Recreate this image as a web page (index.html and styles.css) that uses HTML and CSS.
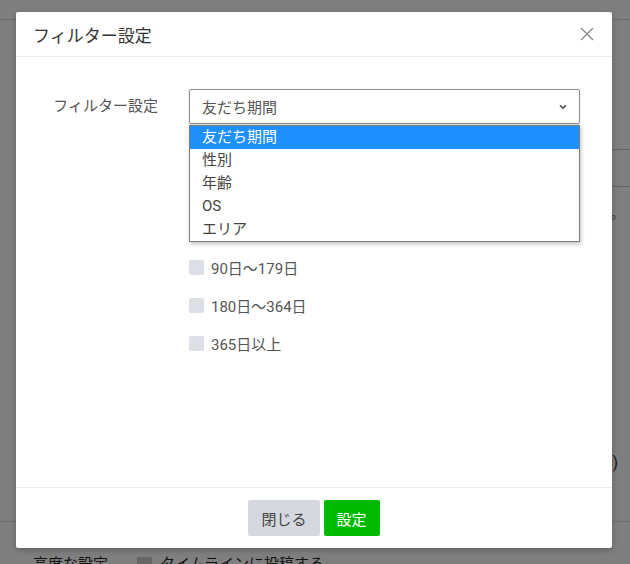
FILE: index.html
```html
<!DOCTYPE html>
<html lang="ja">
<head>
  <meta charset="UTF-8">
  <meta name="viewport" content="width=device-width, initial-scale=1.0">
  <title>フィルター設定</title>
  <link rel="stylesheet" href="styles.css">
</head>
<body>
  <!-- 背景のページ -->
  <div class="page">
    <div class="page-top"></div>
    <div class="page-main">
      <div class="page-row page-row-first"></div>
      <div class="page-row"></div>
      <div class="page-row page-row-tall">
        <span class="page-note">。</span>
        <span class="page-paren">)</span>
      </div>
    </div>
    <div class="page-bottom">
      <span class="page-label">高度な設定</span>
      <span class="page-check"></span>
      <span class="page-text">タイムラインに投稿する</span>
    </div>
  </div>

  <div class="overlay"></div>

  <!-- フィルター設定モーダル -->
  <div class="modal">
    <div class="modal-header">
      <h2 class="modal-title">フィルター設定</h2>
      <span class="close-btn">
        <svg width="14" height="14" viewBox="0 0 14 14"><path d="M1 1L13 13M13 1L1 13" stroke="#888" stroke-width="1.3" fill="none"/></svg>
      </span>
    </div>

    <div class="modal-body">
      <div class="form-row">
        <label class="form-label">フィルター設定</label>
        <div class="form-field">
          <div class="select">
            <span>友だち期間</span>
            <svg class="select-arrow" width="8" height="6" viewBox="0 0 8 6"><path d="M1 1.2L4 4.2L7 1.2" stroke="#444" stroke-width="1.6" fill="none"/></svg>
          </div>
          <ul class="select-list">
            <li class="selected">友だち期間</li>
            <li>性別</li>
            <li>年齢</li>
            <li>OS</li>
            <li>エリア</li>
          </ul>

          <!-- 上の選択肢はドロップダウンの下に隠れている -->
          <div class="check-list">
            <div class="check-item"><span class="check-box"></span>90日〜179日</div>
            <div class="check-item"><span class="check-box"></span>180日〜364日</div>
            <div class="check-item"><span class="check-box"></span>365日以上</div>
          </div>
        </div>
      </div>
    </div>

    <div class="modal-footer">
      <button class="btn btn-close">閉じる</button>
      <button class="btn btn-ok">設定</button>
    </div>
  </div>
</body>
</html>
```

FILE: styles.css
```css
* {
  margin: 0;
  padding: 0;
  box-sizing: border-box;
}

body {
  font-family: Roboto, "Noto Sans CJK JP", sans-serif;
  background-color: #fff;
  color: #555;
  width: 630px;
  height: 564px;
  overflow: hidden;
  position: relative;
}

/* 背景のページ */
.page {
  height: 564px;
  display: flex;
  flex-direction: column;
}

.page-top {
  height: 20px;
  border-bottom: 1px solid #ddd;
  flex-shrink: 0;
}

.page-main {
  flex: 1;
  margin-left: 400px;
}

.page-row {
  height: 37px;
  border-bottom: 1px solid #ccc;
}

.page-row-first {
  height: 130px;
}

.page-row-tall {
  height: 333px;
  border-bottom: none;
  display: flex;
  flex-direction: column;
  align-items: flex-end;
  justify-content: space-between;
  padding: 16px 12px 48px 0;
}

.page-note {
  font-size: 13px;
  color: #666;
  margin-right: -6px;
}

.page-paren {
  font-size: 16px;
  color: #333;
}

.page-bottom {
  height: 43px;
  border-top: 1px solid #ddd;
  display: flex;
  align-items: flex-start;
  padding: 32px 0 0 33px;
  font-size: 15px;
  color: #222;
  line-height: 20px;
}

.page-label {
  width: 104px;
}

.page-check {
  width: 15px;
  height: 15px;
  background-color: #ccc;
  margin: 3px 8px 0 0;
}

.overlay {
  position: absolute;
  top: 0;
  left: 0;
  width: 100%;
  height: 100%;
  background-color: rgba(0, 0, 0, 0.5);
}

/* モーダル */
.modal {
  position: absolute;
  top: 12px;
  left: 16px;
  width: 596px;
  height: 536px;
  background-color: #fff;
  border-radius: 2px;
  box-shadow: 0 2px 6px rgba(0, 0, 0, 0.25);
  display: flex;
  flex-direction: column;
}

.modal-header {
  height: 45px;
  border-bottom: 1px solid #eee;
  display: flex;
  align-items: center;
  justify-content: space-between;
  padding: 0 18px 0 17px;
  flex-shrink: 0;
}

.modal-title {
  font-size: 17px;
  font-weight: normal;
  color: #333;
}

.close-btn {
  display: flex;
  cursor: pointer;
}

.modal-body {
  flex: 1;
  padding: 32px 32px 0 0;
}

.form-row {
  display: grid;
  grid-template-columns: 142px 1fr;
  column-gap: 31px;
}

.form-label {
  text-align: right;
  font-size: 15px;
  line-height: 35px;
  color: #555;
}

.form-field {
  position: relative;
}

.select {
  height: 35px;
  border: 1px solid #8f8f8f;
  border-radius: 2px;
  box-shadow: 0 1px 2px rgba(0, 0, 0, 0.2);
  display: flex;
  align-items: center;
  justify-content: space-between;
  padding: 0 12px 0 12px;
  font-size: 15px;
  color: #555;
}

.select-arrow {
  margin-top: 1px;
}

.select-list {
  position: absolute;
  top: 36px;
  left: 0;
  right: 0;
  list-style: none;
  background-color: #fff;
  border: 1px solid #7d7d7d;
  box-shadow: 1px 2px 4px rgba(0, 0, 0, 0.25);
  z-index: 10;
  font-size: 15px;
  color: #444;
}

.select-list li {
  height: 23px;
  line-height: 23px;
  padding-left: 12px;
}

.select-list li.selected {
  background-color: #1e90ff;
  color: #fff;
}

.check-list {
  margin-top: 124px;
}

.check-item {
  height: 38px;
  display: flex;
  align-items: center;
  gap: 7px;
  font-size: 15px;
  color: #555;
}

.check-box {
  width: 15px;
  height: 15px;
  background-color: #dcdfe4;
  border-radius: 2px;
}

.modal-footer {
  height: 61px;
  border-top: 1px solid #eee;
  display: flex;
  justify-content: center;
  align-items: flex-start;
  gap: 4px;
  padding-top: 12px;
  flex-shrink: 0;
}

.btn {
  height: 36px;
  padding: 0 13px;
  border: none;
  border-radius: 2px;
  font-family: Roboto, "Noto Sans CJK JP", sans-serif;
  font-size: 15px;
  cursor: pointer;
}

.btn-close {
  background-color: #d5d8de;
  color: #444;
}

.btn-ok {
  background-color: #00b900;
  color: #fff;
}
```
